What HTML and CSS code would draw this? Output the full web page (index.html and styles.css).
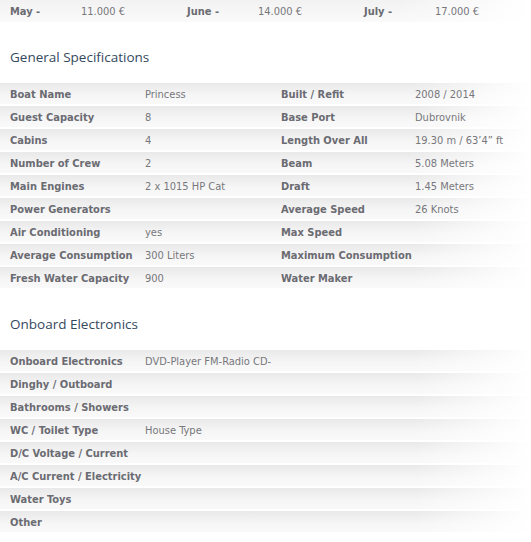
FILE: index.html
```html
<!DOCTYPE html>
<html>
<head>
<meta charset="utf-8">
<link rel="stylesheet" href="styles.css">
</head>
<body>
<div class="prices">
  <div class="price"><span class="pl">May -</span><span class="pv">11.000 €</span></div>
  <div class="price"><span class="pl">June -</span><span class="pv">14.000 €</span></div>
  <div class="price"><span class="pl">July -</span><span class="pv">17.000 €</span></div>
</div>

<h2 class="heading first">General Specifications</h2>
<div class="table">
  <div class="row four"><b>Boat Name</b><span>Princess</span><b>Built / Refit</b><span>2008 / 2014</span></div>
  <div class="row four"><b>Guest Capacity</b><span>8</span><b>Base Port</b><span>Dubrovnik</span></div>
  <div class="row four"><b>Cabins</b><span>4</span><b>Length Over All</b><span>19.30 m / 63’4” ft</span></div>
  <div class="row four"><b>Number of Crew</b><span>2</span><b>Beam</b><span>5.08 Meters</span></div>
  <div class="row four"><b>Main Engines</b><span>2 x 1015 HP Cat</span><b>Draft</b><span>1.45 Meters</span></div>
  <div class="row four"><b>Power Generators</b><span></span><b>Average Speed</b><span>26 Knots</span></div>
  <div class="row four"><b>Air Conditioning</b><span>yes</span><b>Max Speed</b><span></span></div>
  <div class="row four"><b>Average Consumption</b><span>300 Liters</span><b>Maximum Consumption</b><span></span></div>
  <div class="row four"><b>Fresh Water Capacity</b><span>900</span><b>Water Maker</b><span></span></div>
</div>

<h2 class="heading">Onboard Electronics</h2>
<div class="table">
  <div class="row two"><b>Onboard Electronics</b><span>DVD-Player FM-Radio CD-</span></div>
  <div class="row two"><b>Dinghy / Outboard</b><span></span></div>
  <div class="row two"><b>Bathrooms / Showers</b><span></span></div>
  <div class="row two"><b>WC / Toilet Type</b><span>House Type</span></div>
  <div class="row two"><b>D/C Voltage / Current</b><span></span></div>
  <div class="row two"><b>A/C Current / Electricity</b><span></span></div>
  <div class="row two"><b>Water Toys</b><span></span></div>
  <div class="row two"><b>Other</b><span></span></div>
</div>
</body>
</html>
```
FILE: styles.css
```css
html, body {
  margin: 0;
  padding: 0;
  background: #fff;
}
body {
  font-family: "DejaVu Sans Condensed", "DejaVu Sans", sans-serif;
  font-stretch: condensed;
  font-size: 11px;
  color: #777;
  width: 531px;
}
.prices {
  display: grid;
  grid-template-columns: 177px 177px 177px;
  height: 21px;
  padding-top: 1px;
  align-items: center;
  background:
    linear-gradient(to right, rgba(255,255,255,0) 75%, #fff 100%),
    linear-gradient(to bottom, #f2f2f2, #fafafa);
}
.price {
  display: grid;
  grid-template-columns: 71px auto;
  padding-left: 10px;
}
.pl {
  font-weight: bold;
  color: #6b6b72;
}
.pv {
  color: #77777c;
}
.heading {
  font-family: "Open Sans", "Noto Sans", sans-serif;
  font-stretch: normal;
  font-weight: normal;
  font-size: 13.5px;
  line-height: 20px;
  color: #34495e;
  margin: 24px 0 16px 10px;
}
.heading.first {
  margin-top: 25px;
}
.row {
  display: grid;
  height: 20px;
  padding-top: 1px;
  align-items: center;
  padding-left: 10px;
  border-bottom: 2px solid #fff;
  background:
    linear-gradient(to right, rgba(255,255,255,0) 78%, #fff 100%),
    linear-gradient(to bottom, #e9e9e9, #f6f6f6 60%, #f9f9f9);
}
.row.four {
  grid-template-columns: 135px 136px 134px auto;
}
.row.two {
  grid-template-columns: 135px auto;
}
.row b {
  font-weight: bold;
  color: #6b6b72;
  white-space: nowrap;
}
.row span {
  color: #77777c;
  white-space: nowrap;
}
```
